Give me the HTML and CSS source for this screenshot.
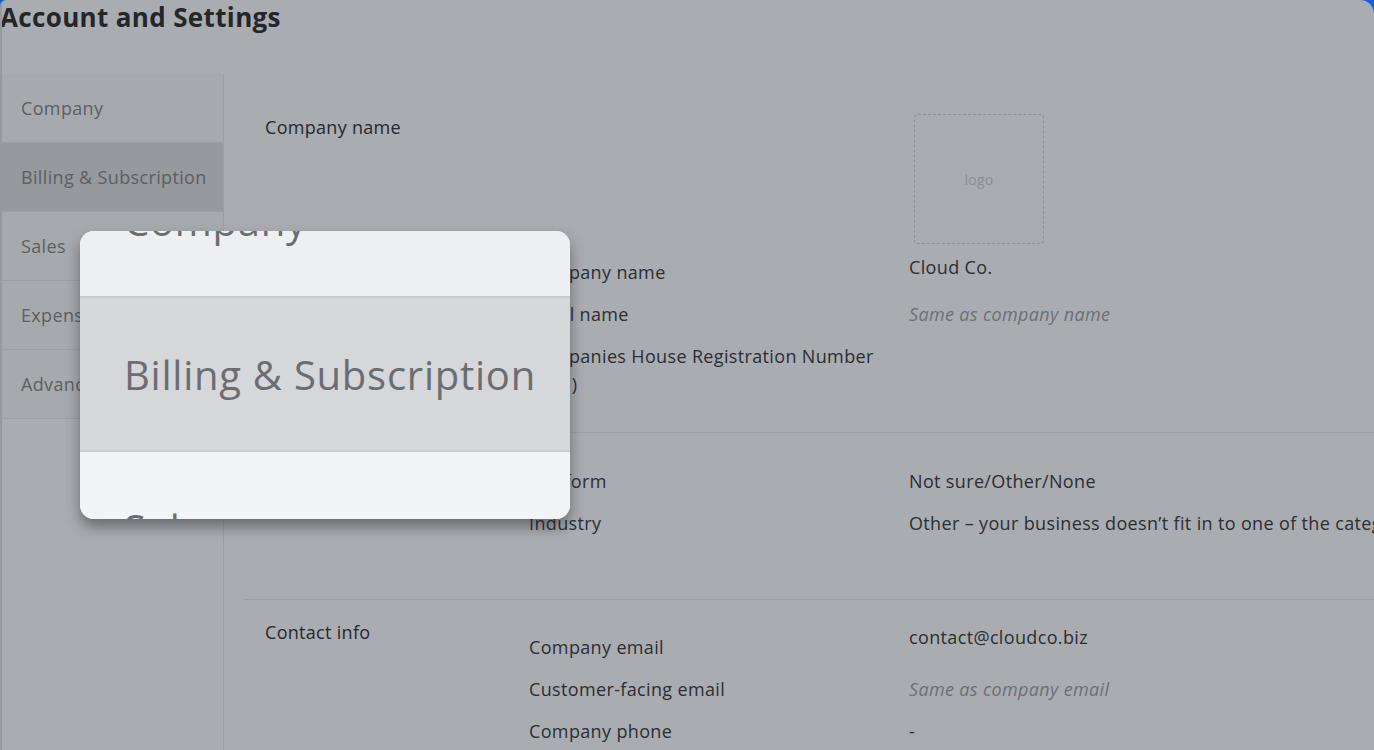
FILE: index.html
```html
<!DOCTYPE html>
<html lang="en">
<head>
<meta charset="utf-8">
<title>Account and Settings</title>
<link rel="stylesheet" href="styles.css">
</head>
<body>
<div class="panel">
  <header class="header">
    <h1 class="title">Account and Settings</h1>
  </header>
  <div class="layout">
    <nav class="sidebar">
      <div class="nav-item nav-first">Company</div>
      <div class="nav-item nav-selected">Billing &amp; Subscription</div>
      <div class="nav-item">Sales</div>
      <div class="nav-item">Expenses</div>
      <div class="nav-item">Advanced</div>
    </nav>
    <main class="content">
      <section class="section section-company">
        <h2 class="section-title title-company">Company name</h2>
        <div class="fields fields-company">
          <div class="logo-row">
            <div class="logo-box">logo</div>
          </div>
          <div class="row first-row">
            <div class="label">Company name</div>
            <div class="value value-up5">Cloud Co.</div>
          </div>
          <div class="row">
            <div class="label">Legal name</div>
            <div class="value placeholder">Same as company name</div>
          </div>
          <div class="row">
            <div class="label label-wrap">Companies House Registration Number (CRN)</div>
            <div class="value"></div>
          </div>
        </div>
      </section>
      <section class="section section-type">
        <h2 class="section-title title-type">Company type</h2>
        <div class="fields fields-type">
          <div class="row">
            <div class="label">Tax form</div>
            <div class="value">Not sure/Other/None</div>
          </div>
          <div class="row">
            <div class="label">Industry</div>
            <div class="value nowrap">Other – your business doesn’t fit in to one of the categories listed</div>
          </div>
        </div>
      </section>
      <section class="section section-contact">
        <h2 class="section-title title-contact">Contact info</h2>
        <div class="fields fields-contact">
          <div class="row">
            <div class="label">Company email</div>
            <div class="value value-up10">contact@cloudco.biz</div>
          </div>
          <div class="row">
            <div class="label">Customer-facing email</div>
            <div class="value placeholder">Same as company email</div>
          </div>
          <div class="row">
            <div class="label">Company phone</div>
            <div class="value">-</div>
          </div>
        </div>
      </section>
    </main>
  </div>

  <div class="magnifier">
    <div class="mag-list">
      <div class="mag-item mag-top">Company</div>
      <div class="mag-item mag-selected">Billing &amp; Subscription</div>
      <div class="mag-item mag-bottom">Sales</div>
    </div>
  </div>
</div>
</body>
</html>
```

FILE: styles.css
```css
html, body {
  margin: 0;
  padding: 0;
  height: 100%;
  background: #1a5fd4;
}
body {
  font-family: "Open Sans", "Noto Sans", sans-serif;
  color: #2c2e32;
  overflow: hidden;
}
.panel {
  position: relative;
  height: 750px;
  background: #a9acb1;
  border-radius: 6px 14px 0 0;
  border-left: 2px solid #969a9f;
  box-sizing: border-box;
  overflow: hidden;
}
.header {
  height: 74px;
}
.title {
  margin: 0 0 0 -2px;
  font-size: 26px;
  line-height: 34px;
  font-weight: 700;
  color: #24262a;
  letter-spacing: 0.35px;
}
.layout {
  display: flex;
  height: 676px;
}
.sidebar {
  width: 221px;
  flex: none;
  border-right: 1px solid #9b9ea3;
}
.nav-item {
  height: 68px;
  border-bottom: 1px solid #9b9ea3;
  background: #a6a9ae;
  display: flex;
  align-items: center;
  padding-left: 19px;
  font-size: 18px;
  letter-spacing: 0.35px;
  font-weight: 400;
  color: #5c5f63;
  white-space: nowrap;
}
.nav-selected {
  background: #96999e;
}
.content {
  flex: 1;
  padding-left: 20px;
  min-width: 0;
}
.section {
  display: grid;
  grid-template-columns: 285px 1fr;
}
.section + .section {
  border-top: 1px solid #9da0a5;
}
.section-title {
  margin: 0;
  padding-left: 21px;
  font-size: 18px;
  font-weight: 500;
  letter-spacing: 0.3px;
  line-height: 28px;
  color: #26282c;
}
.title-company { margin-top: 39px; }
.title-type { margin-top: 18px; }
.title-contact { margin-top: 18px; }
.fields { min-width: 0; }
.fields-company { padding-top: 40px; padding-bottom: 27px; }
.fields-type { padding-top: 27px; padding-bottom: 55px; }
.fields-contact { padding-top: 26px; }
.logo-row {
  padding-left: 385px;
  margin-bottom: 7px;
}
.logo-box {
  width: 128px;
  height: 128px;
  border: 1px dashed #8d9095;
  border-radius: 4px;
  display: flex;
  align-items: center;
  justify-content: center;
  font-size: 14px;
  letter-spacing: 0.3px;
  color: #8a8d92;
}
.row {
  display: grid;
  grid-template-columns: 380px 1fr;
  padding: 7px 0;
  font-size: 18px;
  letter-spacing: 0.35px;
  line-height: 28px;
  align-items: start;
}
.label {
  padding-right: 20px;
}
.value { min-width: 0; }
.value-up5 { margin-top: -5px; }
.value-up10 { margin-top: -10px; }
.placeholder {
  font-style: italic;
  color: #6d7075;
}
.nowrap { white-space: nowrap; }

.magnifier {
  position: absolute;
  left: 78px;
  top: 231px;
  width: 490px;
  height: 288px;
  border-radius: 14px;
  overflow: hidden;
  box-shadow: 0 8px 14px rgba(30, 32, 36, 0.45);
  background: #f3f4f7;
}
.mag-list {
  margin-top: -87px;
}
.mag-item {
  height: 152px;
  display: flex;
  align-items: center;
  padding-left: 44px;
  font-size: 40px;
  letter-spacing: 0.75px;
  color: #6b6d71;
  white-space: nowrap;
}
.mag-top {
  background: #eeeff2;
  border-bottom: 2px solid #c9cacd;
}
.mag-selected {
  background: #d6d7db;
  border-bottom: 2px solid #cbccd0;
}
.mag-bottom {
  background: #f3f4f7;
}
```
